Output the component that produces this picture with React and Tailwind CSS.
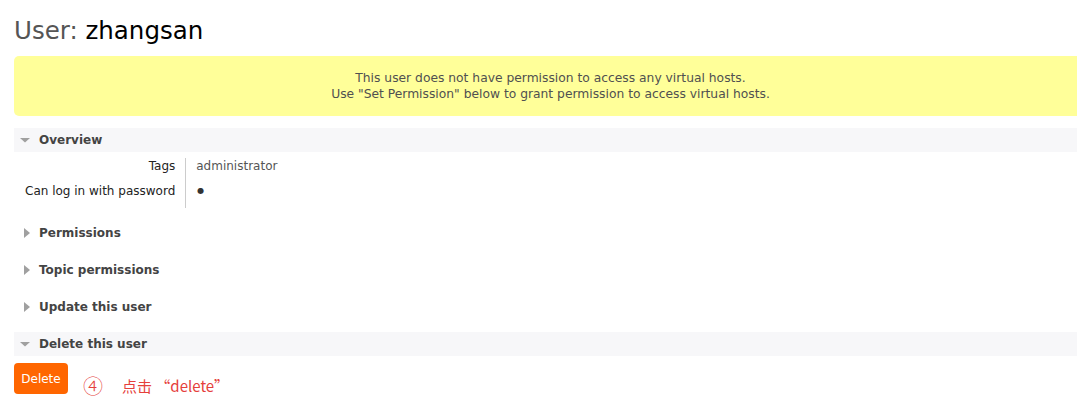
function Caret({ open }) {
  return (
    <svg width="10" height="10" viewBox="0 0 10 10" className="shrink-0">
      {open ? <path d="M0 3 L10 3 L5 7.5 Z" fill="#a0a0a0" /> : <path d="M4 0 L10 5 L4 10 Z" fill="#a0a0a0" />}
    </svg>
  )
}

function SectionHeader({ title, open }) {
  return (
    <div className={`flex items-center gap-[9px] h-[24px] pl-[6px] ${open ? 'bg-[#f7f7f9]' : ''}`}>
      <Caret open={open} />
      <span className="font-bold text-[#444]">{title}</span>
    </div>
  )
}

export default function App() {
  const rows = [
    { label: 'Tags', value: 'administrator' },
    { label: 'Can log in with password', value: '●' },
  ]

  return (
    <div className="bg-white min-h-[408px] pl-[14px] text-[12px] text-[#484848]" style={{ fontFamily: '"DejaVu Sans", Verdana, sans-serif' }}>
      <h1 className="pt-[15px] text-[24.5px] leading-[32px] text-[#555]">
        User: <span className="text-black">zhangsan</span>
      </h1>

      <div className="mt-[9px] h-[60px] rounded-l-[5px] bg-[#ffff99] flex flex-col items-center justify-center text-[#505050] text-[12.3px] leading-[16px] pl-[10px]">
        <p>This user does not have permission to access any virtual hosts.</p>
        <p>Use "Set Permission" below to grant permission to access virtual hosts.</p>
      </div>

      <div className="mt-[12px]">
        <SectionHeader title="Overview" open />
        <div className="flex mt-[6px] mb-[13px] leading-[16px]">
          <div className="flex flex-col items-end pr-[10px] border-r border-[#ccc] pl-[11px]">
            {rows.map((r) => (
              <div key={r.label} className="h-[25px] text-[#222]">{r.label}</div>
            ))}
          </div>
          <div className="flex flex-col pl-[10px] text-[#555]">
            {rows.map((r) => (
              <div key={r.label} className={`h-[25px] ${r.value === '●' ? 'text-[8px] text-[#333] pl-[1px]' : ''}`}>{r.value}</div>
            ))}
          </div>
        </div>
      </div>

      <div className="flex flex-col gap-[13px]">
        <SectionHeader title="Permissions" />
        <SectionHeader title="Topic permissions" />
        <SectionHeader title="Update this user" />
        <SectionHeader title="Delete this user" open />
      </div>

      <div className="flex items-start mt-[7px]">
        <button className="bg-[#ff6600] text-white rounded-[4px] h-[31px] w-[54px] text-[12px]">Delete</button>
        <span className="ml-[15px] mt-[13px] flex items-center text-[#e5403b] text-[15px] leading-[20px]" style={{ fontFamily: '"Noto Sans CJK SC", "DejaVu Sans", sans-serif' }}>
          <span className="text-[20px] font-light">④</span>
          <span className="ml-[19px]">点击 “delete”</span>
        </span>
      </div>
    </div>
  )
}
